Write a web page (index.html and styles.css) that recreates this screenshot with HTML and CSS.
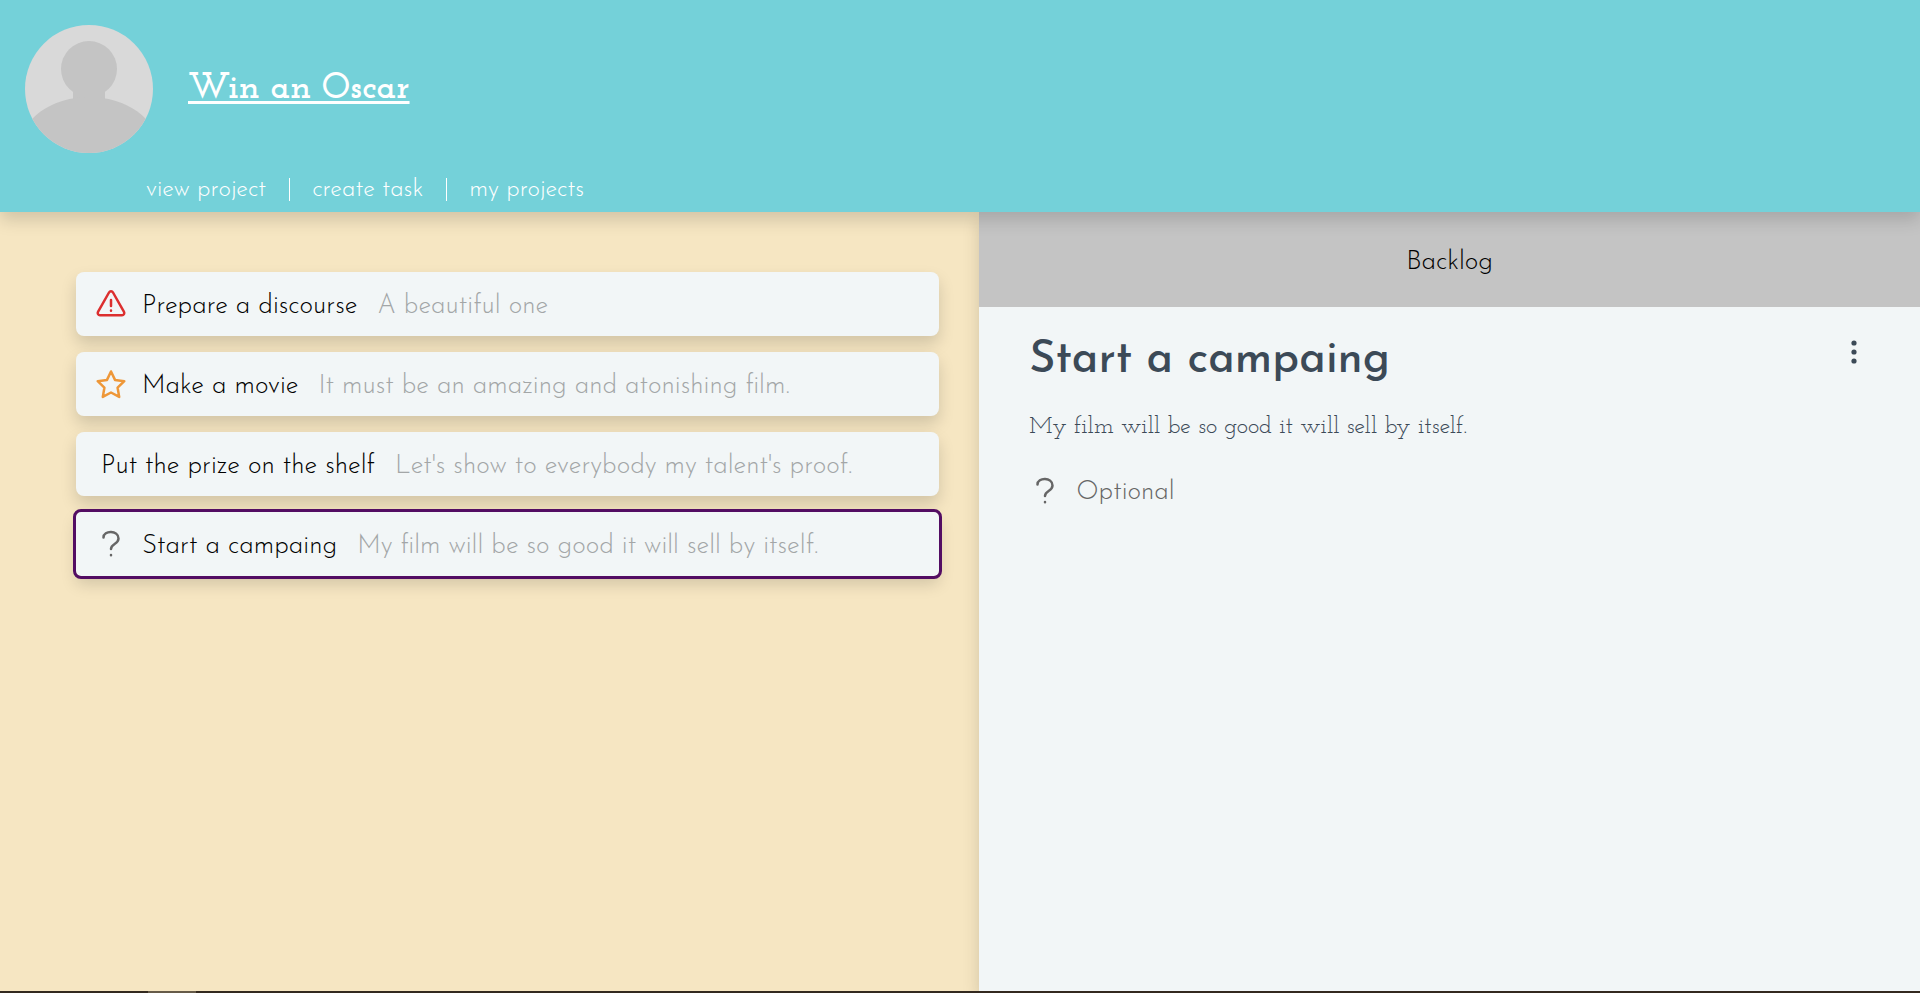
FILE: index.html
```html
<!DOCTYPE html>
<html lang="en">
<head>
<meta charset="utf-8">
<title>Win an Oscar</title>
<link rel="stylesheet" href="styles.css">
</head>
<body>
<header class="header">
  <div class="project">
    <svg class="avatar" viewBox="0 0 128 128" aria-hidden="true">
      <defs><clipPath id="round"><circle cx="64" cy="64" r="64"/></clipPath></defs>
      <g clip-path="url(#round)">
        <rect width="128" height="128" fill="#d9d9d9"/>
        <g fill="#c4c4c4">
          <circle cx="64" cy="44" r="28"/>
          <rect x="48" y="60" width="32" height="20"/>
          <ellipse cx="64" cy="121" rx="68" ry="49"/>
        </g>
      </g>
    </svg>
    <h1 class="project-name"><a href="#project">Win an Oscar</a></h1>
  </div>
  <nav class="nav">
    <a href="#view">view project</a>
    <a href="#create">create task</a>
    <a href="#projects">my projects</a>
  </nav>
</header>
<main class="main">
  <section class="board">
    <ul class="tasks">
      <li><button class="task" type="button">
        <svg class="icon urgent" viewBox="0 0 32 32" aria-hidden="true"><path d="M14 4.500a2.300 2.300 0 0 1 4 0l11 19.300a2.300 2.300 0 0 1-2 3.400h-22a2.300 2.300 0 0 1-2-3.400zM16 12v6m0 4.500v.300"/></svg>
        <span class="task-name">Prepare a discourse</span>
        <span class="task-note">A beautiful one</span>
      </button></li>
      <li><button class="task" type="button">
        <svg class="icon important" viewBox="0 0 32 32" aria-hidden="true"><path d="M16 3.500l4 8.400 9.300 1.300-6.700 6.500 1.600 9.200-8.200-4.400-8.200 4.400 1.600-9.200-6.700-6.500 9.300-1.300z"/></svg>
        <span class="task-name">Make a movie</span>
        <span class="task-note">It must be an amazing and atonishing film.</span>
      </button></li>
      <li><button class="task" type="button">
        <span class="task-name plain">Put the prize on the shelf</span>
        <span class="task-note">Let's show to everybody my talent's proof.</span>
      </button></li>
      <li><button class="task selected" type="button">
        <svg class="icon optional" viewBox="0 0 32 32" aria-hidden="true"><path d="M8.500 9.500c0-7.500 15-7.500 15 1 0 6-7.500 5-7.500 10.500M16 27v.300"/></svg>
        <span class="task-name">Start a campaing</span>
        <span class="task-note">My film will be so good it will sell by itself.</span>
      </button></li>
    </ul>
  </section>
  <section class="detail">
    <div class="status">Backlog</div>
    <article class="detail-body">
      <div class="detail-head">
        <h2 class="detail-title">Start a campaing</h2>
        <button class="menu" type="button" aria-label="Task menu">
          <svg viewBox="0 0 8 24" aria-hidden="true"><circle cx="4" cy="3" r="2.600"/><circle cx="4" cy="12" r="2.600"/><circle cx="4" cy="21" r="2.600"/></svg>
        </button>
      </div>
      <p class="detail-text">My film will be so good it will sell by itself.</p>
      <p class="priority">
        <svg class="icon optional" viewBox="0 0 32 32" aria-hidden="true"><path d="M8.500 9.500c0-7.500 15-7.500 15 1 0 6-7.500 5-7.500 10.500M16 27v.300"/></svg>
        <span>Optional</span>
      </p>
    </article>
  </section>
</main>
<footer class="taskbar"><span class="taskbar-tab"></span></footer>
</body>
</html>
```
FILE: styles.css
```css
* { box-sizing: border-box; }

body {
  margin: 0;
  min-height: 100vh;
  display: flex;
  flex-direction: column;
  font-family: "Josefin Sans", Lato, sans-serif;
  font-weight: 300;
  background: #f6e6c2;
  color: #000;
}

.header {
  position: relative;
  z-index: 1;
  padding: 25px 25px 8px;
  background: #74d1d9;
  box-shadow: 0 8px 16px rgba(0, 0, 0, 0.15);
}
.project { display: flex; align-items: center; gap: 35px; }
.avatar { width: 128px; height: 128px; }
.project-name {
  margin: 0;
  font-family: "Josefin Slab", "DejaVu Serif", serif;
  font-size: 36px;
  font-weight: 700;
}
.project-name a { color: #fff; text-underline-offset: 3px; text-decoration-thickness: 3px; }

.nav { display: flex; padding: 23px 0 0 121px; font-size: 24px; line-height: 28px; }
.nav a { color: #fff; text-decoration: none; }
.nav a + a::before {
  content: "";
  display: inline-block;
  width: 1px;
  height: 23px;
  margin: 0 22px 0 23px;
  vertical-align: -5px;
  background: #fff;
}

.main { flex: 1; display: grid; grid-template-columns: 51% 1fr; }
.board { padding: 60px 40px 40px 76px; }
.tasks { margin: 0; padding: 0; list-style: none; display: grid; gap: 16px; }
.task {
  display: flex;
  align-items: center;
  width: 100%;
  height: 64px;
  padding: 0 19px;
  border: 0;
  border-radius: 8px;
  background: #f2f6f7;
  box-shadow: 0 8px 16px rgba(0, 0, 0, 0.15);
  font: inherit;
  font-size: 26px;
  color: #000;
  text-align: left;
  white-space: nowrap;
}
.task.selected { outline: 3px solid #530d63; border-radius: 5px; }
.task-name { margin-right: 20px; padding-top: 5px; }
.task-name.plain { margin-left: 6px; }
.task-note { padding-top: 5px; color: #a3a6a7; }

.icon {
  flex: none;
  width: 32px;
  height: 32px;
  margin-right: 15px;
  fill: none;
  stroke-width: 2.500;
  stroke-linecap: round;
  stroke-linejoin: round;
}
.urgent { stroke: #dc2f2f; }
.important { stroke: #ee9738; }
.optional { stroke: #666; }

.detail { background: #f2f6f7; box-shadow: 0 8px 16px rgba(0, 0, 0, 0.15); }
.status {
  display: flex;
  align-items: center;
  justify-content: center;
  height: 95px;
  padding-top: 5px;
  background: #c4c4c4;
  font-size: 26px;
}
.detail-body { padding: 24px 50px; color: #3c4a57; }
.detail-head { display: flex; justify-content: space-between; }
.detail-title { margin: 0; font-size: 45px; line-height: 60px; font-weight: 500; }
.menu { width: 32px; height: 44px; padding: 0; border: 0; background: none; }
.menu svg { width: 8px; height: 24px; fill: #3c4a57; }
.detail-text {
  margin: 20px 0 0;
  font-family: "Josefin Slab", "Liberation Serif", serif;
  font-size: 24px;
  font-weight: 400;
  line-height: 32px;
}
.priority { display: flex; align-items: center; margin: 29px 0 0; color: #666; font-size: 26px; line-height: 32px; }
.priority span { padding-top: 5px; }

.taskbar { height: 2px; padding-left: 148px; background: #33291f; }
.taskbar-tab { display: block; width: 48px; height: 2px; background: #665b49; }
```
